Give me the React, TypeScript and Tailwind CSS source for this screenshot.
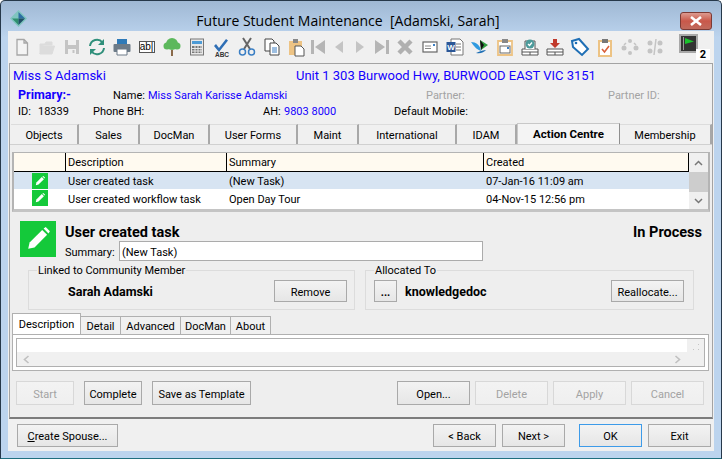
import React from 'react';

const G = '#a6a6a6';

const Ico: React.FC<{ w: string; children: React.ReactNode }> = ({ w, children }) => (
  <div className={`${w} h-full flex items-center justify-center shrink-0`}>
    <svg width="20" height="20" viewBox="0 0 20 20">{children}</svg>
  </div>
);

const Btn: React.FC<{ className: string; off?: boolean; blue?: boolean; children: React.ReactNode }> = ({ className, off, blue, children }) => (
  <div
    className={`${className} h-full flex items-center justify-center pt-[2px] border shrink-0 bg-gradient-to-b from-[#f3f3f3] to-[#e6e6e6] ${
      off ? 'border-[#d8d8d8] text-[#a3a3a3] from-[#efefef] to-[#efefef]' : blue ? 'border-[#3d9be9] text-black' : 'border-[#a9a9a9] text-black'
    }`}
  >
    {children}
  </div>
);

const tabs = [
  { label: 'Objects', w: 'w-[68px]' },
  { label: 'Sales', w: 'w-[61px]' },
  { label: 'DocMan', w: 'w-[70px]' },
  { label: 'User Forms', w: 'w-[88px]' },
  { label: 'Maint', w: 'w-[61px]' },
  { label: 'International', w: 'w-[98px]' },
  { label: 'IDAM', w: 'w-[60px]' },
];

const Pencil: React.FC<{ size: number }> = ({ size }) => (
  <svg width={size} height={size} viewBox="0 0 20 20">
    <polygon points="3,17 4,12.5 13,3.5 16.5,7 7.5,16" fill="#fff" />
    <polygon points="14,2.5 15.5,1.5 18.5,4.5 17.5,6" fill="#fff" />
  </svg>
);

export default function App() {
  return (
    <div className="w-[722px] h-[459px] overflow-hidden border border-[#26384a] border-b-[#1f6f7f] rounded-t-[5px] flex flex-col bg-gradient-to-b from-[#9fb8d4] from-0% to-[#bcd4ee] to-[8%] text-[11px] leading-none text-black font-['Roboto',sans-serif]">
      {/* title bar */}
      <div className="h-[30px] flex items-center pl-[9px] pr-[9px] shrink-0">
        <svg width="17" height="17" viewBox="0 0 17 17" className="mt-[5px] shrink-0">
          <polygon points="8.5,0 17,8.5 8.5,17 0,8.5" fill="#7fc4bf" />
          <polygon points="8.5,2 15,8.5 8.5,8.5" fill="#2d6fa3" />
          <polygon points="2,8.5 8.5,8.5 8.5,15" fill="#2f8f6f" />
          <polygon points="8.5,8.5 15,8.5 8.5,15" fill="#1f4f66" />
        </svg>
        <div className="flex-1 text-center text-[14px] mt-[10px] pr-[11px] whitespace-pre font-['Open_Sans',sans-serif]">Future Student Maintenance  [Adamski, Sarah]</div>
        <div className="w-[32px] h-[18px] mt-[9px] rounded-[3px] border border-[#7c3a34] bg-gradient-to-b from-[#dc9a90] via-[#c9584a] to-[#c06a5c] flex items-center justify-center shrink-0">
          <svg width="14" height="10" viewBox="0 0 14 10">
            <path d="M2 1 L12 9 M12 1 L2 9" stroke="#fff" strokeWidth="2.6" />
          </svg>
        </div>
      </div>

      {/* client area */}
      <div className="mx-[7px] h-[420px] bg-[#f0f0f0] flex flex-col shrink-0">
        {/* toolbar */}
        <div className="h-[32px] flex pl-[1px] shrink-0">
          <Ico w="w-[25px]"><path d="M5 2.5h7l3.5 3.5v12H5z M12 2.5V6h3.5" fill="#f4f4f4" stroke={G} strokeWidth="1.3" /></Ico>
          <Ico w="w-[25px]"><path d="M3 7h5l1-2h6v3H6L3 17zM3 17h12l2.500-8H6z" fill="#dcdcdc" stroke="#dcdcdc" /></Ico>
          <Ico w="w-[25px]"><path d="M3 3h14v14H3z" fill="#c4c4c4" /><path d="M6 3h8v5H6z" fill="#f0f0f0" /><path d="M6 12h8v5H6z" fill="#f0f0f0" /><path d="M10.500 13h2v3h-2z" fill="#c4c4c4" /></Ico>
          <Ico w="w-[25px]"><path d="M3 9a7 7 0 0 1 12.500-3.500" fill="none" stroke="#2f8f7a" strokeWidth="2" /><path d="M17 2v6h-6z" fill="#2f8f7a" /><path d="M17 11a7 7 0 0 1-12.500 3.500" fill="none" stroke="#2f8f7a" strokeWidth="2" /><path d="M3 18v-6h6z" fill="#2f8f7a" /></Ico>
          <Ico w="w-[25px]"><path d="M5 2h10v5H5z" fill="#2f7ab8" /><rect x="1.500" y="7" width="17" height="8" rx="1" fill="#6d7b88" /><path d="M5 12h10v6H5z" fill="#fff" stroke="#6d7b88" /></Ico>
          <div className="w-[25px] h-full flex items-center justify-center shrink-0">
            <div className="w-[16px] h-[12px] border border-[#555] bg-white flex items-center justify-center text-[10px] font-['Liberation_Sans',sans-serif]">ab|</div>
          </div>
          <Ico w="w-[25px]"><path d="M9 13h2v6H9z" fill="#8a6a4a" /><circle cx="10" cy="7" r="6" fill="#5cb85c" /><circle cx="5" cy="9" r="3.500" fill="#5cb85c" /><circle cx="15" cy="9" r="3.500" fill="#5cb85c" /></Ico>
          <Ico w="w-[25px]"><rect x="3.500" y="2" width="13" height="16" fill="#e8e8e8" stroke="#777" /><rect x="5" y="4" width="10" height="3" fill="#4d9bd6" /><path d="M5 9h10v7H5z" fill="#777" /><path d="M8 9v7M11 9v7M14 9v7M5 11.500h10M5 14h10" stroke="#e8e8e8" /></Ico>
          <Ico w="w-[25px]"><path d="M4 7l3 4 7-9 2 1.500-9 11.500-5-6z" fill="#2f6fb5" /><text x="10" y="19.500" textAnchor="middle" fontSize="6.500" fontWeight="700" fontFamily="Liberation Sans" fill="#333">ABC</text></Ico>
          <Ico w="w-[25px]"><path d="M6 1l7 11M14 1L7 12" stroke="#666" strokeWidth="2" /><circle cx="5.500" cy="15" r="3" fill="none" stroke="#3b7fc4" strokeWidth="1.500" /><circle cx="14.500" cy="15" r="3" fill="none" stroke="#3b7fc4" strokeWidth="1.500" /></Ico>
          <Ico w="w-[25px]"><path d="M3 2h7l2 2v10H3z" fill="#fff" stroke="#444" /><path d="M8 6h6l3 3v9H8z" fill="#fff" stroke="#444" /><path d="M10 11h5M10 13h5M10 15h5" stroke="#3b7fc4" /></Ico>
          <Ico w="w-[23px]"><path d="M3 4h13v14H3z" fill="#edc384" /><path d="M7 2h5v4H7z" fill="#888" /><path d="M9 9h6l3 3v7H9z" fill="#fff" stroke="#555" /></Ico>
          <Ico w="w-[21px]"><path d="M3 3h3v14H3zM17 3v14L7 10z" fill="#b5b5b5" /></Ico>
          <Ico w="w-[21px]"><path d="M14 4v12L6 10z" fill="#c4c4c4" /></Ico>
          <Ico w="w-[21px]"><path d="M6 4v12l8-6z" fill="#c4c4c4" /></Ico>
          <Ico w="w-[23px]"><path d="M17 3h-3v14h3zM3 3v14l10-7z" fill="#b5b5b5" /></Ico>
          <Ico w="w-[24px]"><path d="M4 4l12 12M16 4L4 16" stroke="#b0b0b0" strokeWidth="4.500" /></Ico>
          <Ico w="w-[25px]"><rect x="3" y="5" width="14" height="10" fill="#fff" stroke="#666" strokeWidth="1.200" /><path d="M5 9h6M5 11.500h6" stroke="#888" /><rect x="13" y="7" width="2" height="2" fill="#3b7fc4" /></Ico>
          <Ico w="w-[25px]"><path d="M6 2h9l3 3v13H6z" fill="#fff" stroke="#777" /><path d="M11 7h5M11 10h5M11 13h5" stroke="#777" /><rect x="1.500" y="5" width="9" height="10" fill="#2b5797" /><text x="6" y="13" textAnchor="middle" fontSize="8" fontWeight="700" fontFamily="Liberation Sans" fill="#fff">W</text></Ico>
          <Ico w="w-[25px]"><path d="M1 5c5 0 9 3 10 9-3-1-6-3-10-9z" fill="#2f9ae0" /><path d="M6 16c5 1 8-1 10-3-2 0-6 1-10 3z" fill="#1f6fb5" /><path d="M10 3l8 5-7 5z" fill="#2e9e3f" /><path d="M10 3l4 5-3 5z" fill="#111" /></Ico>
          <Ico w="w-[25px]"><path d="M3 4h14v14H3z" fill="#fff" stroke="#edc384" strokeWidth="1.800" /><path d="M7 2h6v4H7z" fill="#888" /><rect x="5" y="9" width="10" height="7" fill="#fff" stroke="#666" /><rect x="12" y="10" width="2" height="2" fill="#3b7fc4" /></Ico>
          <Ico w="w-[25px]"><path d="M2 12h16v6H2z" fill="#fff" stroke="#555" /><path d="M2 15h16M10 15v3" stroke="#555" /><path d="M5 12V4h10v8" fill="#fff" stroke="#555" /><circle cx="10" cy="7" r="4.500" fill="#4c9a9a" /><path d="M8 7l1.500 1.500L12 5.500" fill="none" stroke="#fff" strokeWidth="1.300" /></Ico>
          <Ico w="w-[25px]"><path d="M2 12h16v6H2z" fill="#fff" stroke="#555" /><path d="M2 15h16M10 15v3" stroke="#555" /><path d="M8 2h4v4h3l-5 5-5-5h3z" fill="#c0392b" /></Ico>
          <Ico w="w-[25px]"><path d="M2 4l7-2 9 10-6 6L3 10z" fill="#fff" stroke="#1f6fb5" strokeWidth="2" /><circle cx="6" cy="6" r="1.300" fill="#1f6fb5" /></Ico>
          <Ico w="w-[25px]"><path d="M4 4h12v15H4z" fill="#fff" stroke="#edc384" strokeWidth="2" /><path d="M7 2h6v4H7z" fill="#777" /><path d="M7 12l2.500 3L14 9" fill="none" stroke="#d9603b" strokeWidth="1.600" /></Ico>
          <Ico w="w-[25px]"><circle cx="10" cy="4" r="2" fill="#c4c4c4" /><circle cx="4" cy="11" r="2.500" fill="#c4c4c4" /><circle cx="16" cy="11" r="2.500" fill="#c4c4c4" /><circle cx="10" cy="16" r="2" fill="#c4c4c4" /><path d="M6 6l-2 2M14 6l2 2" stroke="#c4c4c4" strokeWidth="1.500" /></Ico>
          <Ico w="w-[25px]"><circle cx="5" cy="6" r="2.500" fill="#c4c4c4" /><circle cx="15" cy="6" r="2.500" fill="#c4c4c4" /><circle cx="5" cy="14" r="2.500" fill="#c4c4c4" /><circle cx="15" cy="14" r="2.500" fill="#c4c4c4" /><path d="M11 2L9 18" stroke="#c4c4c4" strokeWidth="1.500" /></Ico>
          <div className="ml-[12px] pt-[3px] flex items-start shrink-0">
            <div className="w-[19px] h-[19px] border-2 border-[#a8a8a8] bg-[#333] flex items-center justify-center">
              <svg width="15" height="15" viewBox="0 0 15 15">
                <path d="M2.500 1v13" stroke="#9a9a9a" />
                <path d="M4 2l9 3.500L4 8z" fill="#19c22c" />
              </svg>
            </div>
            <div className="w-[14px] h-[11px] mt-[15px] -ml-[2px] bg-white text-[11px] font-bold text-center leading-[11px]">2</div>
          </div>
        </div>

        {/* main panel */}
        <div className="mx-[1px] h-[356px] border border-[#a3a3a3] border-b-2 border-b-[#7c7c7c] shrink-0 flex flex-col">
          {/* contact header */}
          <div className="h-[59px] shrink-0 pt-[2px] pl-[3px]">
            <div className="h-[18px] flex items-center text-[#1400ff] text-[13px]">
              <span className="w-[283px]">Miss S Adamski</span>
              <span>Unit 1 303 Burwood Hwy, BURWOOD EAST VIC 3151</span>
            </div>
            <div className="h-[16px] mt-[3px] flex items-center">
              <span className="w-[100px] pl-[5px] text-[12.5px] font-bold text-[#1400ff]">Primary:-</span>
              <span className="w-[35px]">Name:</span>
              <span className="w-[278px] text-[#1400ff]">Miss Sarah Karisse Adamski</span>
              <span className="w-[182px] text-[#a3a3a3]">Partner:</span>
              <span className="text-[#a3a3a3]">Partner ID:</span>
            </div>
            <div className="h-[16px] flex items-center">
              <span className="w-[25px] pl-[5px]">ID:</span>
              <span className="w-[55px]">18339</span>
              <span className="w-[170px]">Phone BH:</span>
              <span className="w-[21px]">AH:</span>
              <span className="w-[110px] text-[#1400ff]">9803 8000</span>
              <span>Default Mobile:</span>
            </div>
          </div>

          {/* main tabs */}
          <div className="h-[21px] shrink-0 flex items-end pl-[1px]">
            {tabs.map(t => (
              <div key={t.label} className={`${t.w} h-[20px] pt-[1px] flex items-center justify-center border-r-2 border-[#a8a8a8] border-t border-t-[#dcdcdc] shrink-0`}>
                {t.label}
              </div>
            ))}
            <div className="w-[103px] h-[21px] pt-[1px] flex items-center justify-center text-[11.5px] font-bold bg-[#f4f4f4] border-t border-x border-[#c8c8c8] border-r-[#8f8f8f] shrink-0">Action Centre</div>
            <div className="w-[92px] h-[20px] pt-[1px] flex items-center justify-center border-r-2 border-[#a8a8a8] border-t border-t-[#dcdcdc] shrink-0">Membership</div>
          </div>

          {/* tab page */}
          <div className="flex-1 border-t border-[#d0d0d0] bg-[#eeeeee] pl-[2px]">
            {/* task list */}
            <div className="w-[698px] mt-[7px] border-t border-x-2 border-[#b4b4b4] border-b-[3px] border-b-[#c4c4c4] bg-white flex">
              <div className="w-[675px] h-[56px] shrink-0">
                <div className="h-[19px] flex items-center bg-[#fffaf0] border-b border-black">
                  <div className="w-[52px] h-full border-r border-black" />
                  <div className="w-[161px] h-full border-r border-black flex items-center pl-[2px] pt-[1px]">Description</div>
                  <div className="w-[257px] h-full border-r border-black flex items-center pl-[2px] pt-[1px]">Summary</div>
                  <div className="flex-1 h-full flex items-center pl-[2px] pt-[1px] border-r border-black">Created</div>
                </div>
                <div className="h-[17px] flex items-center bg-[#d7e4f2]">
                  <div className="w-[52px] h-full flex items-center justify-center">
                    <div className="w-[16px] h-[16px] bg-[#14c93a] flex items-center justify-center"><Pencil size={12} /></div>
                  </div>
                  <div className="w-[161px] pl-[2px] pt-[2px]">User created task</div>
                  <div className="w-[257px] pl-[2px] pt-[2px]">(New Task)</div>
                  <div className="pl-[2px] pt-[2px]">07-Jan-16 11:09 am</div>
                </div>
                <div className="h-[18px] flex items-center">
                  <div className="w-[52px] h-full flex items-center justify-center">
                    <div className="w-[16px] h-[16px] bg-[#14c93a] flex items-center justify-center"><Pencil size={12} /></div>
                  </div>
                  <div className="w-[161px] pl-[2px] pt-[2px]">User created workflow task</div>
                  <div className="w-[257px] pl-[2px] pt-[2px]">Open Day Tour</div>
                  <div className="pl-[2px] pt-[2px]">04-Nov-15 12:56 pm</div>
                </div>
              </div>
              <div className="w-[19px] flex flex-col items-center bg-[#f0f0f0] shrink-0">
                <div className="h-[19px] flex items-center justify-center">
                  <svg width="9" height="6" viewBox="0 0 9 6"><path d="M1 5l3.500-3.500L8 5" fill="none" stroke="#777" strokeWidth="1.500" /></svg>
                </div>
                <div className="w-full h-[20px] bg-[#cdcdcd]" />
                <div className="flex-1 flex items-center justify-center">
                  <svg width="9" height="6" viewBox="0 0 9 6"><path d="M1 1l3.500 3.500L8 1" fill="none" stroke="#777" strokeWidth="1.500" /></svg>
                </div>
              </div>
            </div>

            {/* task detail */}
            <div className="h-[40px] mt-[9px] ml-[8px] flex">
              <div className="w-[36px] h-[36px] bg-[#14c93a] flex items-center justify-center shrink-0"><Pencil size={28} /></div>
              <div className="flex-1 pl-[9px]">
                <div className="h-[20px] flex items-start justify-between pr-[10px]">
                  <span className="text-[14.5px] font-bold leading-[23px]">User created task</span>
                  <span className="text-[14.5px] font-bold leading-[23px]">In Process</span>
                </div>
                <div className="h-[20px] flex items-center">
                  <span className="w-[54px] pt-[2px]">Summary:</span>
                  <div className="w-[364px] h-[20px] border border-[#ababab] bg-white flex items-center pl-[2px] pt-[2px]">(New Task)</div>
                </div>
              </div>
            </div>

            {/* linked / allocated */}
            <div className="flex gap-[10px] ml-[16px] mt-[2px]">
              <fieldset className="w-[327px] h-[47px] border border-[#dcdcdc] pl-[8px] pr-[7px]">
                <legend className="px-[1px] h-[14px] leading-[15px]">Linked to Community Member</legend>
                <div className="h-[22px] mt-[3px] flex items-center justify-between">
                  <span className="pl-[31px] pt-[2px] text-[12.5px] font-bold">Sarah Adamski</span>
                  <Btn className="w-[73px]">Remove</Btn>
                </div>
              </fieldset>
              <fieldset className="w-[329px] h-[47px] border border-[#dcdcdc] pl-[8px] pr-[9px]">
                <legend className="px-[1px] h-[14px] leading-[15px]">Allocated To</legend>
                <div className="h-[22px] mt-[3px] flex items-center">
                  <Btn className="w-[23px] font-bold">...</Btn>
                  <span className="pl-[8px] pt-[2px] text-[12.5px] font-bold">knowledgedoc</span>
                  <div className="flex-1" />
                  <Btn className="w-[73px]">Reallocate...</Btn>
                </div>
              </fieldset>
            </div>

            {/* sub tabs */}
            <div className="h-[21px] mt-[3px] flex items-end">
              <div className="w-[69px] h-[21px] flex items-center justify-center bg-white border-t border-x border-[#b0b0b0] shrink-0">Description</div>
              {[
                { label: 'Detail', w: 'w-[40px]' },
                { label: 'Advanced', w: 'w-[60px]' },
                { label: 'DocMan', w: 'w-[50px]' },
                { label: 'About', w: 'w-[40px]' },
              ].map(t => (
                <div key={t.label} className={`${t.w} h-[18px] pt-[1px] flex items-center justify-center border-t border-r border-[#b0b0b0] bg-[#f0f0f0] shrink-0`}>{t.label}</div>
              ))}
            </div>
            <div className="w-[697px] h-[37px] border border-[#b0b0b0] bg-white p-[3px]">
              <div className="h-full border border-[#b0b0b0] flex flex-col">
                <div className="h-[13px] bg-white flex justify-end shrink-0">
                  <div className="w-[17px] h-full bg-[#f0f0f0] flex items-end justify-center pb-[2px]">
                    <svg width="8" height="6" viewBox="0 0 8 6"><path d="M6 0h1v1H6zM1 5h1v1H1zM6 5h1v1H6z" fill="#c4c4c4" /></svg>
                  </div>
                </div>
                <div className="flex-1 bg-[#f0f0f0] flex items-center justify-between pl-[6px] pr-[23px]">
                  <svg width="7" height="9" viewBox="0 0 7 9"><path d="M5.500 1L1.500 4.500 5.500 8" fill="none" stroke="#c0c0c0" strokeWidth="1.600" /></svg>
                  <svg width="7" height="9" viewBox="0 0 7 9"><path d="M1.500 1L5.500 4.500 1.500 8" fill="none" stroke="#c0c0c0" strokeWidth="1.600" /></svg>
                </div>
              </div>
            </div>

            {/* task actions */}
            <div className="h-[24px] mt-[10px] ml-[4px] flex">
              <Btn className="w-[58px]" off>Start</Btn>
              <Btn className="w-[58px] ml-[10px]">Complete</Btn>
              <Btn className="w-[99px] ml-[10px]">Save as Template</Btn>
              <div className="w-[146px]" />
              <Btn className="w-[73px]">Open...</Btn>
              <Btn className="w-[73px] ml-[5px]" off>Delete</Btn>
              <Btn className="w-[73px] ml-[5px]" off>Apply</Btn>
              <Btn className="w-[73px] ml-[5px]" off>Cancel</Btn>
            </div>
          </div>
        </div>

        {/* bottom bar */}
        <div className="h-[23px] mt-[5px] ml-[9px] flex shrink-0">
          <Btn className="w-[101px]"><span><u>C</u>reate Spouse...</span></Btn>
          <div className="w-[315px]" />
          <Btn className="w-[63px]">&lt; Back</Btn>
          <Btn className="w-[63px] ml-[6px]">Next &gt;</Btn>
          <Btn className="w-[63px] ml-[14px]" blue>OK</Btn>
          <Btn className="w-[63px] ml-[6px]">Exit</Btn>
        </div>
      </div>
    </div>
  );
}
